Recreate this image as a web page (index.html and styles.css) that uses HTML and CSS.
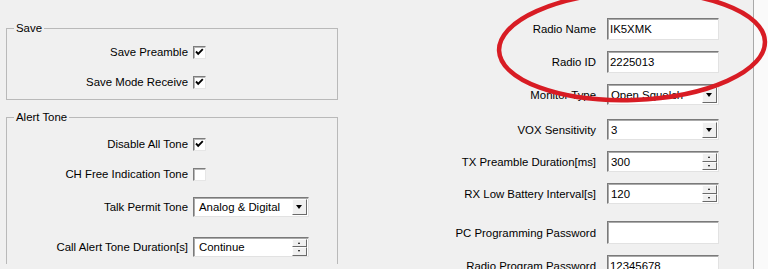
FILE: index.html
```html
<!DOCTYPE html>
<html lang="en">

<head>
  <meta charset="UTF-8" />
  <title>Basic Information</title>
  <link rel="stylesheet" href="styles.css">
</head>

<body>
  <div class="dialog">

    <div class="left">
      <fieldset class="group save">
        <legend>Save</legend>
        <div class="row">
          <label>Save Preamble</label>
          <span class="check"><svg viewBox="0 0 11 11"><path d="M2 4.5l2.2 2.3 4.6-4.6" /></svg></span>
        </div>
        <div class="row">
          <label>Save Mode Receive</label>
          <span class="check"><svg viewBox="0 0 11 11"><path d="M2 4.5l2.2 2.3 4.6-4.6" /></svg></span>
        </div>
      </fieldset>

      <fieldset class="group alert">
        <legend>Alert Tone</legend>
        <div class="row">
          <label>Disable All Tone</label>
          <span class="check"><svg viewBox="0 0 11 11"><path d="M2 4.5l2.2 2.3 4.6-4.6" /></svg></span>
        </div>
        <div class="row">
          <label>CH Free Indication Tone</label>
          <span class="check"></span>
        </div>
        <div class="row talk">
          <label>Talk Permit Tone</label>
          <span class="combo wide"><span class="value">Analog &amp; Digital</span><span class="drop"></span></span>
        </div>
        <div class="row call">
          <label>Call Alert Tone Duration[s]</label>
          <span class="spin wide"><span class="value">Continue</span><span class="arrows"><span class="up"></span><span class="down"></span></span></span>
        </div>
      </fieldset>
    </div>

    <div class="right">
      <div class="field">
        <label>Radio Name</label>
        <span class="edit">IK5XMK</span>
      </div>
      <div class="field">
        <label>Radio ID</label>
        <span class="edit">2225013</span>
      </div>
      <div class="field monitor">
        <label>Monitor Type</label>
        <span class="combo"><span class="value">Open Squelch</span><span class="drop"></span></span>
      </div>
      <div class="field vox">
        <label>VOX Sensitivity</label>
        <span class="combo"><span class="value">3</span><span class="drop"></span></span>
      </div>
      <div class="field">
        <label>TX Preamble Duration[ms]</label>
        <span class="spin"><span class="value">300</span><span class="arrows"><span class="up"></span><span class="down"></span></span></span>
      </div>
      <div class="field">
        <label>RX Low Battery Interval[s]</label>
        <span class="spin"><span class="value">120</span><span class="arrows"><span class="up"></span><span class="down"></span></span></span>
      </div>
      <div class="field pc">
        <label>PC Programming Password</label>
        <span class="edit"></span>
      </div>
      <div class="field">
        <label>Radio Program Password</label>
        <span class="edit">12345678</span>
      </div>
    </div>

    <div class="edge"></div>
  </div>

  <!-- hand drawn marker ring over the name / id fields -->
  <svg class="ring" width="768" height="269" viewBox="0 0 768 269">
    <ellipse cx="632" cy="46" rx="133" ry="54" transform="rotate(-2 632 46)" />
  </svg>
</body>

</html>
```

FILE: styles.css
```css
html {
  background: #f0f0f0;
}

body {
  margin: 0;
  position: relative;
  font-family: "Liberation Sans", Arial, sans-serif;
  font-size: 11.4px;
  color: #000;
}

.dialog {
  display: flex;
  height: 269px;
  overflow: hidden;
}

/* left column: group boxes */

.left {
  width: 332px;
  padding-left: 6px;
  padding-top: 22px;
}

.group {
  margin: 0;
  padding: 2px 0 2px 0;
  min-width: 0;
  border: 1px solid #b9b9b9;
}

.group legend {
  margin-left: 7px;
  padding: 0 2px;
  line-height: 13px;
}

.group.alert {
  margin-top: 11px;
  padding-top: 5px;
  border-bottom: none;
}

.row {
  display: flex;
  align-items: center;
  height: 30px;
}

.row label {
  width: 181px;
  padding-right: 5px;
  text-align: right;
}

.row.talk {
  margin-top: 3px;
}

.row.call {
  margin-top: 10px;
}

/* controls */

.check {
  display: block;
  width: 13px;
  height: 13px;
  box-sizing: border-box;
  background: #fff;
  border: 1px solid;
  border-color: #7d7d7d #e6e6e6 #e6e6e6 #7d7d7d;
  box-shadow: inset 1px 1px 0 #b8b8b8;
}

.check svg {
  display: block;
  width: 11px;
  height: 11px;
}

.check path {
  fill: none;
  stroke: #000;
  stroke-width: 1.9;
}

.edit,
.combo,
.spin {
  display: flex;
  align-items: center;
  width: 112px;
  height: 22px;
  box-sizing: border-box;
  padding-left: 2px;
  background: #fff;
  border: 1px solid;
  border-color: #7a7a7a #e2e2e2 #e2e2e2 #7a7a7a;
  box-shadow: inset 1px 1px 0 #aaaaaa;
  white-space: nowrap;
  overflow: hidden;
}

.combo,
.spin {
  height: 21px;
}

.wide {
  width: 116px;
  height: 20px;
}

.combo .value,
.spin .value {
  flex: 1;
  padding-left: 1px;
  overflow: hidden;
}

.wide .value {
  padding-left: 3px;
}

.drop {
  position: relative;
  width: 15px;
  height: 16px;
  margin-right: 1px;
  box-sizing: border-box;
  background: #f0f0f0;
  border: 1px solid;
  border-color: #fdfdfd #6a6a6a #6a6a6a #fdfdfd;
}

.drop::after {
  content: "";
  position: absolute;
  left: 3px;
  top: 5px;
  border-left: 3.5px solid transparent;
  border-right: 3.5px solid transparent;
  border-top: 4px solid #000;
}

.arrows {
  display: flex;
  flex-direction: column;
  width: 15px;
  height: 17px;
  margin-right: 1px;
}

.arrows span {
  position: relative;
  flex: 1;
  background: #f0f0f0;
  border: 1px solid;
  border-color: #fdfdfd #6a6a6a #6a6a6a #fdfdfd;
}

.arrows .up::after,
.arrows .down::after {
  content: "";
  position: absolute;
  left: 5px;
  top: 2px;
  border-left: 1.5px solid transparent;
  border-right: 1.5px solid transparent;
}

.arrows .up::after {
  border-bottom: 2px solid #000;
}

.arrows .down::after {
  border-top: 2px solid #000;
}

/* right column: plain fields */

.right {
  width: 415px;
  padding-top: 18px;
  display: flex;
  flex-direction: column;
  gap: 11px;
}

.field {
  display: flex;
  align-items: center;
}

.field label {
  width: 258px;
  padding-right: 11px;
  text-align: right;
}

.field.vox {
  margin-top: 3px;
}

.field.pc {
  margin-top: 6px;
}

.field.pc .edit {
  height: 23px;
}

.edge {
  flex: 1;
  background: #fafafa;
  border-left: 1px solid #a9a9a9;
}

.ring {
  position: absolute;
  top: 0;
  left: 0;
  pointer-events: none;
}

.ring ellipse {
  fill: none;
  stroke: #d81c24;
  stroke-width: 4.5;
}
```
